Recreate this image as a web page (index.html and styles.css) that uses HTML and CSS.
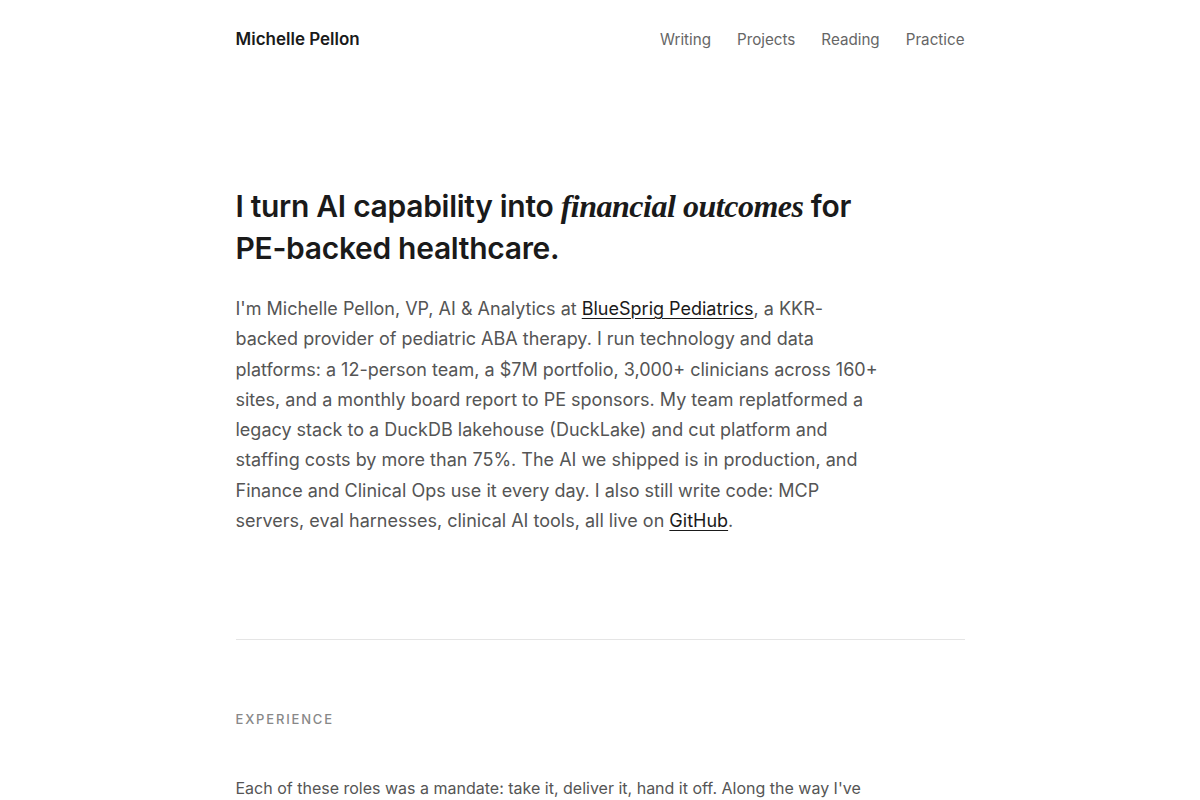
FILE: index.html
```html
<!DOCTYPE html>
<html lang="en">
<head>
<meta charset="UTF-8">
<meta name="viewport" content="width=device-width, initial-scale=1.0">
<title>Michelle Pellon</title>
<link rel="stylesheet" href="styles.css">
</head>
<body>

<div class="page">
    <header class="site-header">
        <a href="#" class="site-name">Michelle Pellon</a>
        <nav class="site-nav">
            <a href="#">Writing</a>
            <a href="#">Projects</a>
            <a href="#">Reading</a>
            <a href="#">Practice</a>
        </nav>
    </header>

    <section class="hero">
        <h1>I turn AI capability into <em>financial outcomes</em> for PE-backed healthcare.</h1>
        <p>I'm Michelle Pellon, VP, AI &amp; Analytics at <a href="#">BlueSprig Pediatrics</a>, a KKR-backed provider of pediatric ABA therapy. I run technology and data platforms: a 12-person team, a $7M portfolio, 3,000+ clinicians across 160+ sites, and a monthly board report to PE sponsors. My team replatformed a legacy stack to a DuckDB lakehouse (DuckLake) and cut platform and staffing costs by more than 75%. The AI we shipped is in production, and Finance and Clinical Ops use it every day. I also still write code: MCP servers, eval harnesses, clinical AI tools, all live on <a href="#">GitHub</a>.</p>
    </section>

    <hr class="divider">

    <section class="experience">
        <h2 class="section-label">Experience</h2>
        <p>Each of these roles was a mandate: take it, deliver it, hand it off. Along the way I've built teams, platforms and reporting that outlasted my time in the seat.</p>
    </section>
</div>

</body>
</html>
```

FILE: styles.css
```css
body {
    margin: 0;
    background: #ffffff;
    color: #1a1a1a;
    font-family: Inter, "Noto Sans", sans-serif;
    -webkit-font-smoothing: antialiased;
}

a {
    color: inherit;
}

.page {
    max-width: 729px;
    margin: 0 auto;
    padding: 0 20px;
}

/* --- Header --- */
.site-header {
    display: flex;
    justify-content: space-between;
    align-items: center;
    height: 78px;
}

.site-name {
    font-size: 17px;
    font-weight: 600;
    text-decoration: none;
    color: #1a1a1a;
}

.site-nav {
    display: flex;
    gap: 26px;
}

.site-nav a {
    font-size: 15.2px;
    color: #666666;
    text-decoration: none;
}

/* --- Hero --- */
.hero {
    padding-top: 107px;
}

.hero h1 {
    max-width: 640px;
    margin: 0 0 25px;
    font-size: 30px;
    font-weight: 600;
    line-height: 42px;
    letter-spacing: -0.01em;
}

.hero h1 em {
    font-family: "Liberation Serif", "DejaVu Serif", serif;
    font-style: italic;
    font-weight: 700;
    font-size: 32px;
    letter-spacing: -0.015em;
}

.hero p {
    max-width: 644px;
    margin: 0;
    font-size: 18px;
    line-height: 30.3px;
    color: #555555;
}

.hero p a {
    color: #1a1a1a;
    text-underline-offset: 3px;
    text-decoration-thickness: 1px;
}

.divider {
    border: 0;
    border-top: 1px solid #e5e5e5;
    margin: 103px 0 0;
}

/* --- Experience --- */
.experience {
    padding-top: 69px;
}

.section-label {
    margin: 0 0 46px;
    font-size: 13px;
    font-weight: 500;
    line-height: 20px;
    letter-spacing: 0.14em;
    text-transform: uppercase;
    color: #888888;
}

.experience p {
    max-width: 644px;
    margin: 0;
    font-size: 16px;
    line-height: 27px;
    color: #555555;
}
```
